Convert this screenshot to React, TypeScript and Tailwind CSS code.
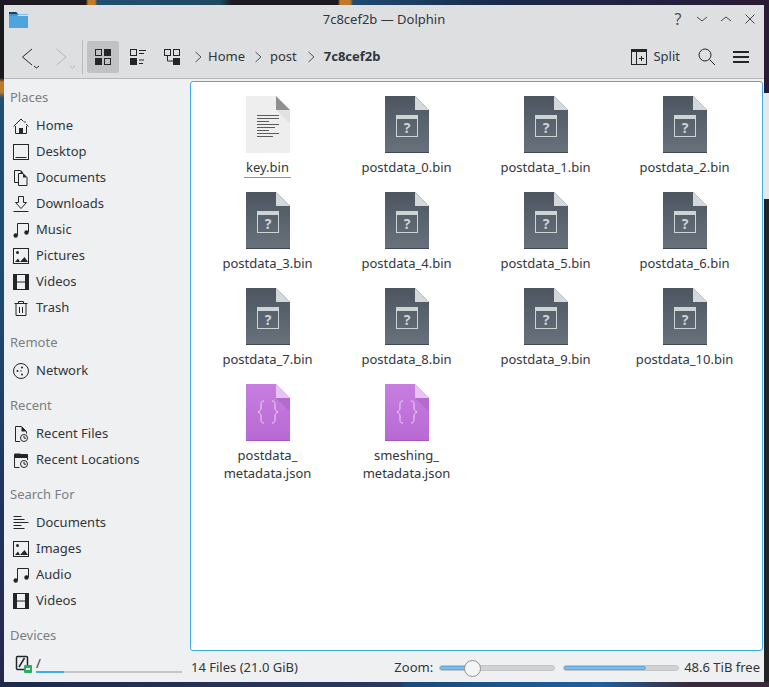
import { ReactNode } from 'react';

const ink = '#232629';

function Svg({ size = 16, children, className }: { size?: number; children: ReactNode; className?: string }) {
  return (
    <svg width={size} height={size} viewBox="0 0 16 16" fill="none" stroke={ink} strokeWidth="1" className={className}>
      {children}
    </svg>
  );
}

const icons: Record<string, ReactNode> = {
  home: (
    <>
      <path d="M.5 8.500 8 1 10.500 3.500M13 6l2.500 2.500" />
      <path d="M2.500 8v7.500h11V8" />
      <rect x="6" y="10" width="4" height="5.500" fill={ink} stroke="none" />
      <circle cx="12" cy="4" r=".8" fill={ink} stroke="none" />
    </>
  ),
  desktop: (
    <>
      <rect x=".5" y=".5" width="15" height="15" />
      <path d="M2.500 13.500h11" />
    </>
  ),
  documents: (
    <>
      <path d="M5.500 12.500h-4V.5h6" />
      <path d="M5.500 3.500h4.500l4 4v8h-8.500z" fill="none" />
      <path d="M7.500.5h1l2 3h-3z" fill={ink} stroke="none" />
      <path d="M10 3.500l4 4h-4z" fill={ink} stroke="none" />
    </>
  ),
  downloads: (
    <>
      <path d="M.5 15.500h15" />
      <path d="M5.500 .5h5v6h3l-5.500 6-5.500-6h3z" />
    </>
  ),
  music: (
    <>
      <path d="M4.500 13V1.500h11V10" />
      <circle cx="2.700" cy="13.500" r="2.200" fill={ink} stroke="none" />
      <circle cx="13.500" cy="10.500" r="2.200" fill={ink} stroke="none" />
    </>
  ),
  pictures: (
    <>
      <rect x=".5" y=".5" width="15" height="15" />
      <circle cx="4.500" cy="4.500" r="1.500" fill={ink} stroke="none" />
      <path d="M2 14l3-3.500L7 14zM7 14l4.500-5L15 14z" fill={ink} stroke="none" />
    </>
  ),
  videos: (
    <>
      <rect x=".5" y=".5" width="15" height="15" />
      <path d="M3.500 .5v15M12.500 .5v15M3.500 8h9" />
      <path d="M0 0h3.500v16H0zM12.500 0H16v16h-3.500z" fill={ink} stroke="none" />
    </>
  ),
  trash: (
    <>
      <path d="M1.500 3.500h13M5.500 3.500v-2h5v2" />
      <path d="M3 3.500h10v12H3zM6.500 7v6M9.500 7v6" />
    </>
  ),
  network: (
    <>
      <circle cx="8" cy="8" r="7.500" />
      <circle cx="4.500" cy="8" r="1" fill={ink} stroke="none" />
      <circle cx="9" cy="4.500" r="1" fill={ink} stroke="none" />
      <circle cx="9" cy="11.500" r="1" fill={ink} stroke="none" />
      <circle cx="8" cy="8" r=".7" fill={ink} stroke="none" />
    </>
  ),
  recentFiles: (
    <>
      <path d="M7 15.500H2.500V.5h6l5 5v2" />
      <path d="M8.500.5l5 5h-5z" fill={ink} stroke="none" />
      <circle cx="11" cy="12" r="3.500" />
      <path d="M11 10v2.200h2" />
    </>
  ),
  recentLocations: (
    <>
      <path d="M1.500 2.500h13v3h-13z" fill={ink} stroke={ink} />
      <path d="M1.500 5v10.500h5M14.500 5v3" />
      <path d="M1.500 1.500h6v2h-6z" fill={ink} stroke="none" />
      <circle cx="11" cy="12" r="3.500" />
      <path d="M11 10v2.200h2" />
    </>
  ),
  lines: <path d="M.5 1.500h8M.5 4.500h11M.5 7.500h15M.5 10.500h8M.5 13.500h11" />,
};

function PlaceRow({ icon, label }: { icon: string; label: string }) {
  return (
    <div className="flex h-[26px] items-center pl-[9px]">
      <Svg>{icons[icon]}</Svg>
      <span className="ml-[7px] text-[13px] text-[#31363b]">{label}</span>
    </div>
  );
}

function Heading({ children, className }: { children: ReactNode; className?: string }) {
  return <div className={`pl-[6px] text-[13px] leading-[18px] text-[#7b7e82] ${className ?? ''}`}>{children}</div>;
}

function GenericFile() {
  return (
    <svg width="46" height="58" viewBox="0 0 46 58" className="shrink-0">
      <defs>
        <linearGradient id="gfile" x1="0" y1="0" x2="0" y2="1">
          <stop offset="0" stopColor="#4d5660" />
          <stop offset="1" stopColor="#68727c" />
        </linearGradient>
      </defs>
      <path d="M1 0h30l14 14v43H1z" fill="url(#gfile)" />
      <path d="M1 56h44v1H1z" fill="#3f4750" />
      <path d="M31 0l14 14H31z" fill="#d5d8da" />
      <rect x="12.500" y="19.500" width="21" height="21" fill="none" stroke="#d0d3d6" />
      <rect x="12" y="19" width="22" height="4" fill="#d0d3d6" />
      <text x="23" y="37" textAnchor="middle" fontSize="14" fontWeight="700" fill="#d0d3d6" fontFamily="'Noto Sans', sans-serif">?</text>
    </svg>
  );
}

function TextFile() {
  return (
    <svg width="46" height="58" viewBox="0 0 46 58" className="shrink-0">
      <path d="M1 0h30l14 14v43H1z" fill="#eeeeee" />
      <path d="M31 14l14 14V14z" fill="#e2e2e2" />
      <path d="M31 0l14 14H31z" fill="#8f8f8f" />
      <g fill="#5b5b5b">
        <rect x="12" y="19" width="22" height="1" />
        <rect x="12" y="22" width="22" height="1" />
        <rect x="12" y="25" width="12" height="1" />
        <rect x="12" y="28" width="22" height="1" />
        <rect x="12" y="31" width="18" height="1" />
        <rect x="12" y="34" width="12" height="1" />
        <rect x="12" y="37" width="22" height="1" />
        <rect x="12" y="40" width="16" height="1" />
      </g>
    </svg>
  );
}

function JsonFile() {
  return (
    <svg width="46" height="58" viewBox="0 0 46 58" className="shrink-0">
      <defs>
        <linearGradient id="jfile" x1="0" y1="0" x2="0" y2="1">
          <stop offset="0" stopColor="#c77ee0" />
          <stop offset="1" stopColor="#b869d4" />
        </linearGradient>
      </defs>
      <path d="M1 0h30l14 14v43H1z" fill="url(#jfile)" />
      <path d="M1 56h44v1H1z" fill="#a555c2" />
      <path d="M31 14l14 14V14z" fill="#b36ccd" />
      <path d="M31 0l14 14H31z" fill="#e6c3f1" />
      <g fill="none" stroke="#eed9f5" strokeWidth="1">
        <path d="M19 17c-3 0-3 1.500-3 4v3c0 2-1 3-3 4 2 1 3 2 3 4v3c0 2.500 0 4 3 4" />
        <path d="M27 17c3 0 3 1.500 3 4v3c0 2 1 3 3 4-2 1-3 2-3 4v3c0 2.500 0 4-3 4" />
      </g>
    </svg>
  );
}

const files: { name: ReactNode; kind: 'text' | 'generic' | 'json'; underline?: boolean }[] = [
  { name: 'key.bin', kind: 'text', underline: true },
  ...Array.from({ length: 11 }, (_, i) => ({ name: `postdata_${i}.bin`, kind: 'generic' as const })),
  { name: <>postdata_<br />metadata.json</>, kind: 'json' },
  { name: <>smeshing_<br />metadata.json</>, kind: 'json' },
];

function FileItem({ name, kind, underline }: { name: ReactNode; kind: string; underline?: boolean }) {
  return (
    <div className="flex h-[96px] flex-col items-center">
      {kind === 'text' ? <TextFile /> : kind === 'json' ? <JsonFile /> : <GenericFile />}
      <div className="mt-[4px] text-center text-[13px] leading-[18px] text-[#31363b]">
        <span className={underline ? 'inline-block border-b border-[#3daee9] px-[2px] pb-px' : ''}>{name}</span>
      </div>
    </div>
  );
}

function Slider({ fill, knob }: { fill: number; knob?: boolean }) {
  return (
    <div className="relative h-[6px] w-[116px] rounded-full border border-[#c3c5c7] bg-[#d0d2d4]">
      <div className="h-full rounded-full border border-[#5fa8dc] bg-[#7cbdeb]" style={{ width: fill }} />
      {knob && (
        <div className="absolute top-[-6px] left-[24px] h-[17px] w-[17px] rounded-full border border-[#8f9194] bg-[#f4f5f5]" />
      )}
    </div>
  );
}

export default function App() {
  return (
    <div
      className="h-[687px] w-[769px] overflow-hidden bg-[#1b2f4f] pt-[5px] pr-[5px] pb-[5px] pl-[4px] [background:linear-gradient(90deg,#1c1a20_0px,#1c1a20_86px,#c07a28_88px,#c07a28_95px,#1f5070_97px,#1f4a60_220px,#1c1a20_232px,#1c1a20_338px,#c07a28_340px,#c07a28_350px,#1f4a70_353px,#1a2a4a_500px,#2a1a35_769px)_top/100%_5px_no-repeat,linear-gradient(90deg,#1d2a4a_0px,#2a3a60_400px,#1a4a7a_405px,#1f5fa0_600px,#3a2a3a_690px,#3a2a3a_769px)_bottom/100%_5px_no-repeat,linear-gradient(180deg,#1a181c_0px,#1a181c_78px,#c07a28_82px,#c07a28_92px,#1f5070_98px,#1f4a70_300px,#1f3560_480px,#26264a_100%)_left/4px_100%_no-repeat,linear-gradient(180deg,#2a1a35_0px,#2a1a35_93px,#e8e8e8_93px,#e8e8e8_199px,#232323_199px)_right/5px_100%_no-repeat]"
      style={{ fontFamily: "'Noto Sans', sans-serif" }}
    >
      <div className="flex h-[677px] w-[760px] flex-col bg-[#eff0f1]">
        <div className="bg-[#dedfe0]">
          {/* Title bar */}
          <div className="relative flex h-[29px] items-center justify-center">
            <svg width="19" height="17" viewBox="0 0 19 17" className="absolute top-[6px] left-[5px]">
              <path d="M0 1h7l2 2h10v14H0z" fill="#3f94d1" />
              <path d="M0 1h7l2 2H0z" fill="#1d3f5c" />
              <path d="M0 5h19v12H0z" fill="#4ea5de" />
              <path d="M0 5h8l2-1.500h9V5z" fill="#cfe6f5" />
            </svg>
            <span className="text-[13px] text-[#31363b]">7c8cef2b — Dolphin</span>
            <div className="absolute top-[5px] right-[6px] flex items-center gap-[8px]">
              <span className="flex w-[16px] justify-center text-[16px] leading-[18px] text-[#4d5257]">?</span>
              <Svg size={16} className="opacity-80"><path d="M3 6l5 4 5-4" /></Svg>
              <Svg size={16} className="opacity-80"><path d="M3 10l5-4 5 4" /></Svg>
              <Svg size={16} className="opacity-80"><path d="M3.500 3.500l9 9M12.500 3.500l-9 9" /></Svg>
            </div>
          </div>

          {/* Toolbar */}
          <div className="flex h-[45px] items-center border-b border-[#b4b6b8] pt-[2px] pl-[17px]">
            <div className="flex w-[28px] items-start">
              <svg width="22" height="24" viewBox="0 0 22 24" fill="none" stroke={ink}>
                <path d="M11 5 1.500 13l9.500 8" transform="translate(0 -1)" />
                <path d="M13 21l2.500 2 2.500-2" />
              </svg>
            </div>
            <div className="ml-[6px] flex w-[27px]">
              <svg width="24" height="24" viewBox="0 0 24 24" fill="none" stroke="#b3b5b7">
                <path d="M1.500 4l9.500 8-9.500 8" />
                <path d="M15 21l2.500 2 2.500-2" />
              </svg>
            </div>
            <div className="mr-[4px] h-[34px] w-px bg-[#b9bbbd]" />
            <div className="flex h-[32px] w-[32px] items-center justify-center rounded-[3px] bg-[#bfc1c3]">
              <Svg>
                <rect x=".5" y=".5" width="6" height="6" />
                <rect x="9" y="0" width="7" height="7" fill={ink} stroke="none" />
                <rect x="0" y="9" width="7" height="7" fill={ink} stroke="none" />
                <rect x="9.500" y="9.500" width="6" height="6" />
              </Svg>
            </div>
            <div className="flex w-[37px] justify-center">
              <Svg>
                <rect x=".5" y=".5" width="6" height="6" />
                <path d="M9 1.500h7M9 4.500h5M9 11h5M9 14.500h4" />
                <rect x="0" y="9" width="7" height="7" fill={ink} stroke="none" />
              </Svg>
            </div>
            <div className="flex w-[32px] justify-center">
              <Svg>
                <rect x=".5" y=".5" width="6" height="6" />
                <rect x="9.500" y=".5" width="6" height="6" />
                <path d="M3.500 7v5h6" />
                <rect x="9" y="9" width="7" height="7" fill={ink} stroke="none" />
              </Svg>
            </div>
            <div className="ml-[7px] flex items-center text-[13px] text-[#31363b]">
              <svg width="7" height="12" viewBox="0 0 7 12" fill="none" stroke="#4d5257"><path d="M.5 1l5.500 5-5.500 5" /></svg>
              <span className="ml-[6px]">Home</span>
              <svg width="7" height="12" viewBox="0 0 7 12" fill="none" stroke="#4d5257" className="ml-[10px]"><path d="M.5 1l5.500 5-5.500 5" /></svg>
              <span className="ml-[8px]">post</span>
              <svg width="7" height="12" viewBox="0 0 7 12" fill="none" stroke="#4d5257" className="ml-[11px]"><path d="M.5 1l5.500 5-5.500 5" /></svg>
              <span className="ml-[9px] font-bold">7c8cef2b</span>
            </div>
            <div className="ml-auto flex items-center pr-[15px]">
              <Svg>
                <rect x=".5" y=".5" width="15" height="15" />
                <rect x="0" y="0" width="16" height="3" fill={ink} stroke="none" />
                <path d="M5.500 3v13M8 9.500h5M10.500 7v5" />
              </Svg>
              <span className="ml-[6px] text-[13px] text-[#31363b]">Split</span>
              <svg width="18" height="18" viewBox="0 0 18 18" fill="none" stroke={ink} className="ml-[18px]">
                <circle cx="7" cy="7" r="6" />
                <path d="M11.500 11.500l5.500 5.500" />
              </svg>
              <svg width="16" height="12" viewBox="0 0 16 12" fill={ink} className="ml-[17px]">
                <rect y="0" width="16" height="2" />
                <rect y="5" width="16" height="2" />
                <rect y="10" width="16" height="2" />
              </svg>
            </div>
          </div>
        </div>

        <div className="flex min-h-0 flex-1">
          {/* Sidebar */}
          <div className="w-[186px] shrink-0 pt-[9px]">
            <Heading>Places</Heading>
            <div className="mt-[7px]">
              <PlaceRow icon="home" label="Home" />
              <PlaceRow icon="desktop" label="Desktop" />
              <PlaceRow icon="documents" label="Documents" />
              <PlaceRow icon="downloads" label="Downloads" />
              <PlaceRow icon="music" label="Music" />
              <PlaceRow icon="pictures" label="Pictures" />
              <PlaceRow icon="videos" label="Videos" />
              <PlaceRow icon="trash" label="Trash" />
            </div>
            <Heading className="mt-[12px]">Remote</Heading>
            <div className="mt-[7px]">
              <PlaceRow icon="network" label="Network" />
            </div>
            <Heading className="mt-[12px]">Recent</Heading>
            <div className="mt-[7px]">
              <PlaceRow icon="recentFiles" label="Recent Files" />
              <PlaceRow icon="recentLocations" label="Recent Locations" />
            </div>
            <Heading className="mt-[12px]">Search For</Heading>
            <div className="mt-[7px]">
              <PlaceRow icon="lines" label="Documents" />
              <PlaceRow icon="pictures" label="Images" />
              <PlaceRow icon="music" label="Audio" />
              <PlaceRow icon="videos" label="Videos" />
            </div>
            <Heading className="mt-[12px]">Devices</Heading>
            <div className="relative mt-[7px] flex h-[26px] items-center pl-[11px]">
              <svg width="18" height="18" viewBox="0 0 18 18" fill="none" stroke={ink}>
                <rect x="1.500" y="1.500" width="11" height="13" rx="1" strokeWidth="1.500" />
                <path d="M9.500 3 4 12" strokeWidth="1.500" />
                <rect x="9" y="10" width="8" height="8" rx="1" fill="#27ae60" stroke="none" />
                <rect x="11" y="13" width="4" height="2" fill="#ffffff" stroke="none" />
              </svg>
              <div className="ml-[3px] flex-1 pr-[4px]">
                <div className="text-[13px] leading-[15px] text-[#31363b]">/</div>
                <div className="h-[2px] w-[146px] bg-[#c4c6c8]">
                  <div className="h-full w-[28px] bg-[#3daee9]" />
                </div>
              </div>
            </div>
          </div>

          {/* File view + status bar */}
          <div className="flex min-w-0 flex-1 flex-col">
            <div className="mt-[2px] mr-px h-[570px] rounded-[3px] border border-[#3daee9] bg-white pt-[14px] pl-[7px]">
              <div className="grid grid-cols-[repeat(4,139px)]">
                {files.map((f, i) => (
                  <FileItem key={i} {...f} />
                ))}
              </div>
            </div>
            <div className="flex flex-1 items-center pt-[2px] pr-[4px] text-[13px] text-[#31363b]">
              <span className="ml-px">14 Files (21.0 GiB)</span>
              <span className="ml-auto">Zoom:</span>
              <div className="ml-[6px]"><Slider fill={28} knob /></div>
              <div className="ml-[8px]"><Slider fill={82} /></div>
              <span className="ml-[5px]">48.6 TiB free</span>
            </div>
          </div>
        </div>
      </div>
    </div>
  );
}
